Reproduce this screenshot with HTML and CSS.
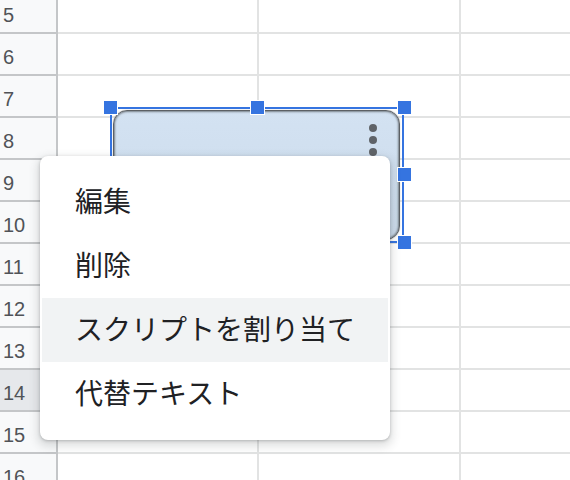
FILE: index.html
```html
<!DOCTYPE html>
<html lang="ja">
<head>
<meta charset="utf-8">
<link rel="stylesheet" href="styles.css">
</head>
<body>
<div class="sheet">
  <div class="row"><div class="hdr">5</div><div class="cell a"></div><div class="cell b"></div><div class="cell c"></div></div>
  <div class="row"><div class="hdr">6</div><div class="cell a"></div><div class="cell b"></div><div class="cell c"></div></div>
  <div class="row"><div class="hdr">7</div><div class="cell a"></div><div class="cell b"></div><div class="cell c"></div></div>
  <div class="row"><div class="hdr">8</div><div class="cell a"></div><div class="cell b"></div><div class="cell c"></div></div>
  <div class="row"><div class="hdr">9</div><div class="cell a"></div><div class="cell b"></div><div class="cell c"></div></div>
  <div class="row"><div class="hdr">10</div><div class="cell a"></div><div class="cell b"></div><div class="cell c"></div></div>
  <div class="row"><div class="hdr">11</div><div class="cell a"></div><div class="cell b"></div><div class="cell c"></div></div>
  <div class="row"><div class="hdr">12</div><div class="cell a"></div><div class="cell b"></div><div class="cell c"></div></div>
  <div class="row"><div class="hdr">13</div><div class="cell a"></div><div class="cell b"></div><div class="cell c"></div></div>
  <div class="row"><div class="hdr active">14</div><div class="cell a"></div><div class="cell b"></div><div class="cell c"></div></div>
  <div class="row"><div class="hdr">15</div><div class="cell a"></div><div class="cell b"></div><div class="cell c"></div></div>
  <div class="row"><div class="hdr">16</div><div class="cell a"></div><div class="cell b"></div><div class="cell c"></div></div>
</div>

<div class="drawing">
  <div class="shape">
    <div class="kebab"><span class="dot"></span><span class="dot"></span><span class="dot"></span></div>
  </div>
  <span class="handle h-tl"></span>
  <span class="handle h-tm"></span>
  <span class="handle h-tr"></span>
  <span class="handle h-mr"></span>
  <span class="handle h-br"></span>
</div>

<div class="menu">
  <div class="item">編集</div>
  <div class="item">削除</div>
  <div class="item hover">スクリプトを割り当て</div>
  <div class="item">代替テキスト</div>
</div>
</body>
</html>
```

FILE: styles.css
```css
html, body {
  margin: 0;
  padding: 0;
  width: 570px;
  height: 480px;
  overflow: hidden;
  background: #fff;
}

.sheet {
  display: flex;
  flex-direction: column;
  margin-top: -8px;
}

.row {
  display: flex;
  height: 42px;
}

.hdr {
  box-sizing: border-box;
  width: 58px;
  flex: none;
  background: #f8f9fa;
  border-right: 2px solid #c4c6c8;
  border-bottom: 2px solid #c4c6c8;
  font-family: "Liberation Sans", Arial, sans-serif;
  font-size: 20px;
  color: #505357;
  padding: 12px 0 0 3px;
  line-height: 22px;
}

.hdr.active {
  background: #e6e8eb;
}

.cell {
  box-sizing: border-box;
  border-right: 2px solid #e2e3e3;
  border-bottom: 2px solid #e2e3e3;
}

.cell.a { width: 201px; flex: none; }
.cell.b { width: 202px; flex: none; }
.cell.c { flex: 1; border-right: none; }

.drawing {
  position: absolute;
  left: 110px;
  top: 107px;
  width: 294px;
  height: 136px;
  box-sizing: border-box;
  border: 2px solid #3574e0;
}

.shape {
  position: absolute;
  left: 1px;
  top: 1px;
  right: 2px;
  bottom: 1px;
  border-radius: 14px;
  background: linear-gradient(#d3e2f2, #cbdaea);
  border: 1px solid #5c6064;
  box-shadow: inset 0 0 2px 1px rgba(60, 64, 67, 0.6), 0 0 1px rgba(0,0,0,0.4);
}

.kebab {
  position: absolute;
  top: 13px;
  right: 22px;
  display: flex;
  flex-direction: column;
  gap: 4px;
}

.dot {
  width: 8px;
  height: 8px;
  border-radius: 50%;
  background: #5f6368;
}

.handle {
  position: absolute;
  width: 13px;
  height: 13px;
  background: #3574e0;
  border: 1px solid #fff;
}

.h-tl { left: -9px; top: -9px; }
.h-tm { left: 138px; top: -9px; }
.h-tr { right: -10px; top: -9px; }
.h-mr { right: -10px; top: 58px; }
.h-br { right: -10px; bottom: -9px; }

.menu {
  position: absolute;
  left: 40px;
  top: 156px;
  width: 350px;
  box-sizing: border-box;
  padding: 14px 2px;
  background: #fff;
  border-radius: 8px;
  box-shadow: 0 1px 3px rgba(60, 64, 67, 0.3), 0 4px 8px 3px rgba(60, 64, 67, 0.15);
}

.item {
  box-sizing: border-box;
  height: 64px;
  line-height: 60px;
  padding: 0 0 4px 33px;
  font-family: "Noto Sans CJK JP", "Noto Sans", sans-serif;
  font-size: 28px;
  color: #202124;
  white-space: nowrap;
}

.item.hover {
  background: #f1f3f4;
}
```
